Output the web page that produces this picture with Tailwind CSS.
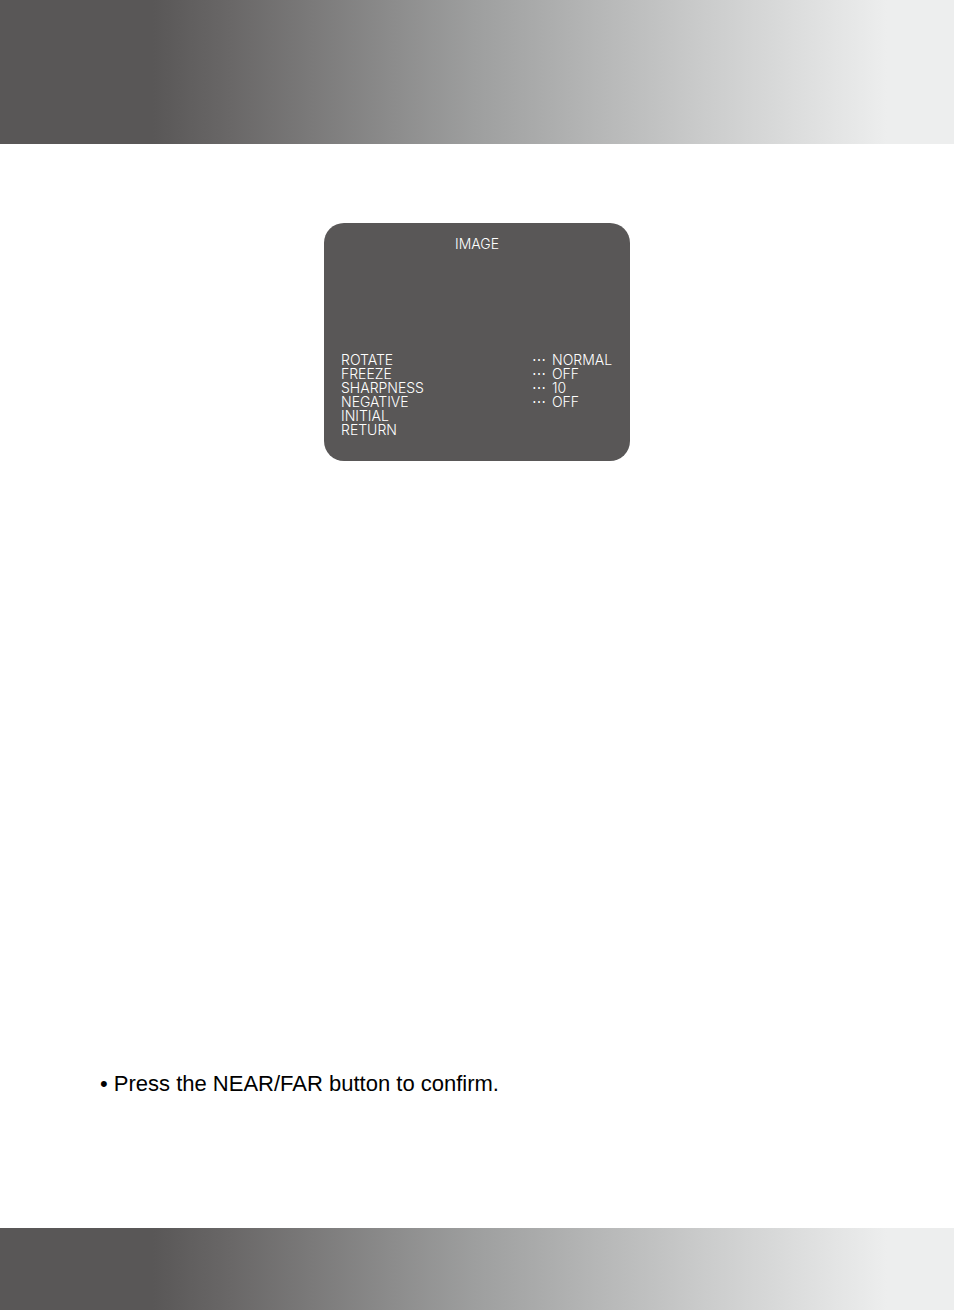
<!DOCTYPE html>
<html lang="en">
<head>
  <meta charset="UTF-8" />
  <meta name="viewport" content="width=device-width, initial-scale=1.0" />
  <title>Image menu</title>
  <script src="https://cdn.jsdelivr.net/npm/@tailwindcss/browser@4"></script>
</head>
<body class="flex flex-col min-h-screen bg-white text-black font-['Liberation_Sans',Arial,sans-serif]">

  <!-- Top band -->
  <header class="h-36 bg-[linear-gradient(to_right,#595757_16%,#696767_24%,#9e9f9f_50%,#c9caca_73%,#edeeee_93%)]"></header>

  <main class="flex-1 flex flex-col justify-between pt-[79px] pb-32">
    <!-- On-screen menu -->
    <section class="w-[306px] mx-auto rounded-[20px] bg-[#595757] text-white px-[17px] pt-3 pb-6 text-[14px] leading-[18px] font-light font-[Inter,sans-serif]">
      <h1 class="text-center">IMAGE</h1>
      <table class="w-full mt-[100px] text-left leading-[14px]">
        <tbody>
          <tr><th class="font-light p-0">ROTATE</th><td class="w-5 p-0 font-[Roboto,sans-serif]">⋯</td><td class="w-[61px] p-0">NORMAL</td></tr>
          <tr><th class="font-light p-0">FREEZE</th><td class="p-0 font-[Roboto,sans-serif]">⋯</td><td class="p-0">OFF</td></tr>
          <tr><th class="font-light p-0">SHARPNESS</th><td class="p-0 font-[Roboto,sans-serif]">⋯</td><td class="p-0">10</td></tr>
          <tr><th class="font-light p-0">NEGATIVE</th><td class="p-0 font-[Roboto,sans-serif]">⋯</td><td class="p-0">OFF</td></tr>
          <tr><th class="font-light p-0">INITIAL</th></tr>
          <tr><th class="font-light p-0">RETURN</th></tr>
        </tbody>
      </table>
    </section>

    <p class="px-[100px] text-[22px] leading-8">• Press the NEAR/FAR button to confirm.</p>
  </main>

  <!-- Bottom band -->
  <footer class="h-[82px] bg-[linear-gradient(to_right,#595757_16%,#696767_24%,#9e9f9f_50%,#c9caca_73%,#edeeee_93%)]"></footer>

</body>
</html>
